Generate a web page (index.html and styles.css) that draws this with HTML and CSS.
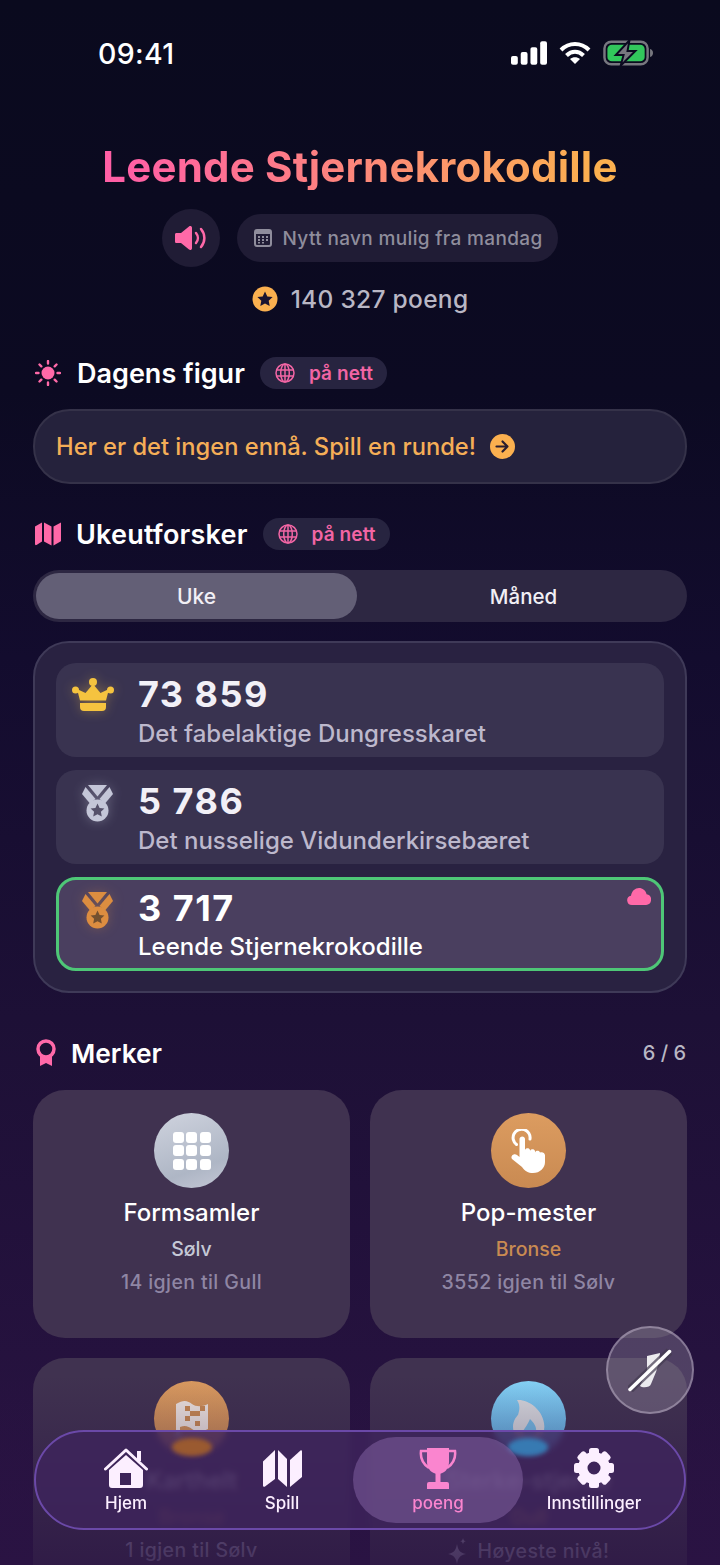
FILE: index.html
```html
<!DOCTYPE html>
<html>
<head>
  <title>Poeng</title>
  <link rel="stylesheet" href="styles.css">
</head>
<body>
<div class="screen">

  <!-- Status bar -->
  <div class="status">
    <span class="time">09:41</span>
    <div class="status-icons">
      <svg width="36" height="24" viewBox="0 0 37 24" fill="#fff">
        <rect x="0" y="15" width="7" height="9" rx="2"/>
        <rect x="10" y="11" width="7" height="13" rx="2"/>
        <rect x="20" y="6" width="7" height="18" rx="2"/>
        <rect x="30" y="0" width="7" height="24" rx="2"/>
      </svg>
      <svg width="32" height="24" viewBox="0 0 32 24" fill="none" stroke="#fff" stroke-width="4">
        <path d="M2 9C10 1 22 1 30 9"/>
        <path d="M7.5 14.5C12.5 9.5 19.500 9.500 24.500 14.500"/>
        <path d="M16 23l-5-5c3-2.500 7-2.500 10 0z" fill="#fff" stroke="none"/>
      </svg>
      <svg width="50" height="26" viewBox="0 0 51 26">
        <rect x="1.500" y="1.500" width="44" height="23" rx="7" fill="none" stroke="#77777f" stroke-width="2.500"/>
        <rect x="4.500" y="4.500" width="38" height="17" rx="4.500" fill="#32c75c"/>
        <path d="M48 9c2 .5 3 2 3 4s-1 3.500-3 4z" fill="#77777f"/>
        <path d="M27 0L13 15h8l-3 11 15-15h-8z" fill="#77777f" stroke="#0b0a20" stroke-width="2"/>
      </svg>
    </div>
  </div>

  <main class="content">
    <!-- Profile -->
    <h1 class="player-name">Leende Stjernekrokodille</h1>
    <div class="name-row">
      <button class="sound-btn">
        <svg width="34" height="26" viewBox="0 0 34 26" fill="none">
          <path d="M1 9.500c0-1 .7-1.500 1.500-1.500H7L15 1.500c1.200-1 3-.3 3 1.300v20.400c0 1.600-1.800 2.300-3 1.300L7 18H2.500C1.700 18 1 17.500 1 16.500z" fill="#ff69a8"/>
          <path d="M22 8c2.500 3 2.500 7 0 10M27 4c4.500 5.500 4.500 12.500 0 18" stroke="#ff69a8" stroke-width="2.500" stroke-linecap="round"/>
        </svg>
      </button>
      <div class="name-pill">
        <svg width="18" height="18" viewBox="0 0 18 18" fill="#8f8d9c">
          <path d="M3 0h12a3 3 0 0 1 3 3v12a3 3 0 0 1-3 3H3a3 3 0 0 1-3-3V3a3 3 0 0 1 3-3zM2 5v10a1 1 0 0 0 1 1h12a1 1 0 0 0 1-1V5z" fill-rule="evenodd"/>
          <rect x="4" y="7" width="2" height="2"/><rect x="8" y="7" width="2" height="2"/><rect x="12" y="7" width="2" height="2"/>
          <rect x="4" y="10" width="2" height="2"/><rect x="8" y="10" width="2" height="2"/><rect x="12" y="10" width="2" height="2"/>
          <rect x="4" y="13" width="2" height="1.500"/><rect x="8" y="13" width="2" height="1.500"/>
        </svg>
        <span>Nytt navn mulig fra mandag</span>
      </div>
    </div>
    <div class="points">
      <svg width="26" height="26" viewBox="0 0 26 26">
        <circle cx="13" cy="13" r="12.500" fill="#fbb04f"/>
        <path d="M13 5.500l2.300 4.900 5.300.7-3.900 3.700 1 5.300-4.700-2.600-4.700 2.600 1-5.300-3.900-3.700 5.300-.7z" fill="#1a1330"/>
      </svg>
      <span>140 327 poeng</span>
    </div>

    <!-- Dagens figur -->
    <div class="section-head head-daily">
      <svg class="head-icon" width="26" height="26" viewBox="0 0 26 26" fill="#ff69a8">
        <circle cx="13" cy="13" r="6.500"/>
        <g stroke="#ff69a8" stroke-width="2.400" stroke-linecap="round">
          <path d="M13 1v2.500M13 22.500V25M1 13h2.500M22.500 13H25M4.500 4.500l1.800 1.800M19.700 19.700l1.800 1.800M4.500 21.500l1.800-1.800M19.700 6.300l1.800-1.800"/>
        </g>
      </svg>
      <h2>Dagens figur</h2>
      <span class="online-pill">
        <svg class="globe" width="20" height="20" viewBox="0 0 20 20" fill="none" stroke="#f265a4" stroke-width="1.500">
          <circle cx="10" cy="10" r="9"/><ellipse cx="10" cy="10" rx="4.300" ry="9"/>
          <path d="M10 1v18M1.500 7h17M1.500 13h17"/>
        </svg>
        på nett
      </span>
    </div>
    <div class="daily-banner">
      <span>Her er det ingen ennå. Spill en runde!</span>
      <svg width="25" height="25" viewBox="0 0 25 25" fill="none">
        <circle cx="12.500" cy="12.500" r="12.500" fill="#fbb04f"/>
        <path d="M6.500 12.500h11M12.500 7.500l5 5-5 5" stroke="#2a1d2f" stroke-width="2.200" stroke-linecap="round" stroke-linejoin="round"/>
      </svg>
    </div>

    <!-- Ukeutforsker -->
    <div class="section-head head-weekly">
      <svg class="head-icon map-icon" width="26" height="24" viewBox="0 0 26 24" fill="#ff69a8">
        <path d="M0 4.500L7 0.500v19L1.500 23C.7 23.400 0 23 0 22z"/>
        <path d="M9 0.500l7.500 4v19L9 19.500z"/>
        <path d="M18.500 4.500L26 0.500V18.500a1 1 0 0 1-.5 1l-7 4z"/>
      </svg>
      <h2>Ukeutforsker</h2>
      <span class="online-pill">
        <svg class="globe" width="20" height="20" viewBox="0 0 20 20" fill="none" stroke="#f265a4" stroke-width="1.500">
          <circle cx="10" cy="10" r="9"/><ellipse cx="10" cy="10" rx="4.300" ry="9"/>
          <path d="M10 1v18M1.500 7h17M1.500 13h17"/>
        </svg>
        på nett
      </span>
    </div>
    <div class="segment">
      <div class="segment-item active">Uke</div>
      <div class="segment-item">Måned</div>
    </div>

    <div class="board">
      <div class="board-row">
        <div class="rank">
          <svg class="crown" width="42" height="34" viewBox="0 0 42 34" fill="#f5c33f">
            <circle cx="21" cy="4" r="4"/><circle cx="3.500" cy="12" r="3.500"/><circle cx="38.500" cy="12" r="3.500"/>
            <path d="M21 6l7.500 9L37 11l-3 11.500H8L5 11l8.500 4z"/>
            <path d="M8 25h26v4a4 4 0 0 1-4 4H12a4 4 0 0 1-4-4z"/>
          </svg>
        </div>
        <div class="row-text">
          <div class="score">73 859</div>
          <div class="row-name">Det fabelaktige Dungresskaret</div>
        </div>
      </div>
      <div class="board-row">
        <div class="rank">
          <svg class="medal silver" width="31" height="37" viewBox="0 0 31 37">
            <path class="ribbon" d="M6 0h19l-9.500 11.500z"/>
            <path class="ribbon" d="M3.500 2l10 12-5.500 4.500L0 9z"/>
            <path class="ribbon" d="M27.500 2l-10 12 5.500 4.500L31 9z"/>
            <circle class="disc" cx="15.500" cy="25.500" r="11"/>
            <path class="star" d="M15.500 18.500l2.100 4.400 4.800.6-3.500 3.300.9 4.800-4.300-2.400-4.300 2.400.9-4.800-3.500-3.300 4.800-.6z"/>
          </svg>
        </div>
        <div class="row-text">
          <div class="score">5 786</div>
          <div class="row-name">Det nusselige Vidunderkirsebæret</div>
        </div>
      </div>
      <div class="board-row mine">
        <div class="rank">
          <svg class="medal bronze" width="31" height="37" viewBox="0 0 31 37">
            <path class="ribbon" d="M6 0h19l-9.500 11.500z"/>
            <path class="ribbon" d="M3.500 2l10 12-5.500 4.500L0 9z"/>
            <path class="ribbon" d="M27.500 2l-10 12 5.500 4.500L31 9z"/>
            <circle class="disc" cx="15.500" cy="25.500" r="11"/>
            <path class="star" d="M15.500 18.500l2.100 4.400 4.800.6-3.500 3.300.9 4.800-4.300-2.400-4.300 2.400.9-4.800-3.500-3.300 4.800-.6z"/>
          </svg>
        </div>
        <div class="row-text">
          <div class="score">3 717</div>
          <div class="row-name">Leende Stjernekrokodille</div>
        </div>
        <svg class="cloud" width="24" height="17" viewBox="0 0 25 18" fill="#ff69a8">
          <path d="M5 18a5 5 0 0 1-1-9.900C5 3 8.500 0 12.500 0c3.800 0 7 2.500 8 6.500A5.800 5.800 0 0 1 20 18z"/>
        </svg>
      </div>
    </div>

    <!-- Merker -->
    <div class="section-head head-badges">
      <svg class="head-icon" width="22" height="28" viewBox="0 0 22 28" fill="none">
        <path d="M5 17v10l6-3 6 3V17z" fill="#ff69a8"/>
        <circle cx="11" cy="10" r="8" stroke="#ff69a8" stroke-width="3.500" fill="#1d1033"/>
      </svg>
      <h2>Merker</h2>
      <span class="badge-count">6 / 6</span>
    </div>
    <div class="badges">
      <div class="badge">
        <div class="badge-icon icon-silver">
          <div class="dots">
            <i></i><i></i><i></i><i></i><i></i><i></i><i></i><i></i><i></i>
          </div>
        </div>
        <div class="badge-name">Formsamler</div>
        <div class="badge-tier tier-silver">Sølv</div>
        <div class="badge-next">14 igjen til Gull</div>
      </div>
      <div class="badge">
        <div class="badge-icon icon-bronze">
          <svg width="38" height="44" viewBox="0 0 38 44" fill="#fff">
            <path d="M6.500 15.500A8.500 8.500 0 1 1 20 10" fill="none" stroke="#fff" stroke-width="3" stroke-linecap="round"/>
            <path d="M9.500 10c0-3.500 5.500-3.500 5.500 0v11c.5-2.500 4.500-2.500 5 0v1c.5-2.500 4.500-2.500 5 0v1.500c.5-2.500 4.500-2.500 5 0 3-1 5 1 5 3V33c0 6-5 11-12 11-5 0-8-2-11-6L2 30c-2-3 2-6 5-4l2.500 2z"/>
          </svg>
        </div>
        <div class="badge-name">Pop-mester</div>
        <div class="badge-tier tier-bronze">Bronse</div>
        <div class="badge-next">3552 igjen til Sølv</div>
      </div>
      <div class="badge">
        <div class="badge-icon icon-bronze">
          <svg width="32" height="40" viewBox="0 0 32 40">
            <path d="M0 5c8-5 12-3 16 0s10 3 16 0v25c-6 3-12 3-16 0s-8-5-16 0z" fill="#efe6e0"/>
            <g fill="#c98a52">
              <rect x="9" y="7" width="5" height="5"/><rect x="19" y="12" width="5" height="5"/>
              <rect x="14" y="12" width="5" height="5"/><rect x="9" y="17" width="5" height="5"/>
              <rect x="24" y="7" width="5" height="5"/><rect x="19" y="22" width="5" height="5"/>
            </g>
            <rect x="0" y="5" width="4" height="35" rx="2" fill="#efe6e0"/>
          </svg>
        </div>
        <div class="badge-name">Karthelt</div>
        <div class="badge-tier tier-bronze">Bronse</div>
        <div class="badge-next">1 igjen til Sølv</div>
      </div>
      <div class="badge">
        <div class="badge-icon icon-blue">
          <svg width="34" height="44" viewBox="0 0 34 44">
            <path d="M5 3C16 2 30 12 32 26c2 10-4 18-15 18C7 44 1 38 1 30c0-6 3-10 5-12C8 12 8 8 5 3z" fill="#d8dade"/>
            <path d="M18 22c4 4 7 8 6 13-1 4-4 6-7 6-4 0-7-3-6-7 2-3 5-7 7-12z" fill="#74bde6"/>
          </svg>
        </div>
        <div class="badge-name">Sterke-stjerne</div>
        <div class="badge-tier tier-gold">Gull</div>
        <div class="badge-next">
          <svg width="20" height="26" viewBox="0 0 20 26" fill="#8f86a4">
            <path d="M9 6c1 6 3 9 9 10-6 1-8 4-9 10-1-6-3-9-9-10 6-1 8-4 9-10zM15 0c.3 2 1 3 3 3.300-2 .3-2.700 1.300-3 3.200-.3-1.900-1-2.900-3-3.200 2-.3 2.700-1.300 3-3.300z"/>
          </svg>
          Høyeste nivå!
        </div>
      </div>
    </div>
  </main>

  <div class="bottom-fade"></div>

  <!-- Floating mute button -->
  <button class="fab">
    <svg width="44" height="44" viewBox="0 0 44 44" fill="none">
      <path d="M19 8l13-3-1 9-3 10-5 12c-1 4-9 4-11 2l7-16z" fill="#ecebef"/>
      <path d="M41.500 3.500L2 41.500" stroke="#433a50" stroke-opacity="0.7" stroke-width="8"/>
      <path d="M41.500 3.500L2 41.500" stroke="#fff" stroke-width="3.500" stroke-linecap="round"/>
    </svg>
  </button>

  <!-- Bottom navigation -->
  <nav class="tabbar">
    <span class="refract refract-left"></span>
    <span class="refract refract-right"></span>
    <a class="tab">
      <span class="tab-icon">
        <svg width="44" height="40" viewBox="0 0 44 40" fill="#fcefff">
          <path d="M1.500 21L22 2l20.500 19" fill="none" stroke="#fcefff" stroke-width="3" stroke-linecap="round" stroke-linejoin="round"/>
          <rect x="33" y="3" width="4" height="10"/>
          <path fill-rule="evenodd" d="M5 22L22 7l17 15v15a3 3 0 0 1-3 3H8a3 3 0 0 1-3-3zM16 25v12h11V25z"/>
        </svg>
      </span>
      <span class="tab-label">Hjem</span>
    </a>
    <a class="tab">
      <span class="tab-icon">
        <svg width="39" height="37" viewBox="0 0 39 37" fill="#fcefff">
          <path d="M0 11.500L12 0v29L2 36.500c-1 .6-2 .2-2-1z"/>
          <path d="M15 0l9 9v28l-9-8z"/>
          <path d="M27 10L37.500.5c.7-.6 1.500-.2 1.500.7V27L27 37z"/>
        </svg>
      </span>
      <span class="tab-label">Spill</span>
    </a>
    <a class="tab active">
      <span class="tab-icon">
        <svg width="38" height="41" viewBox="0 0 38 41" fill="#fa85cf">
          <path d="M8 0h22v14c0 7-5 12-11 12S8 21 8 14z"/>
          <path d="M8 3H2c-1 8 2 13 8 17M30 3h6c1 8-2 13-8 17" fill="none" stroke="#fa85cf" stroke-width="2.500"/>
          <rect x="16.500" y="25" width="5" height="9"/>
          <path d="M10 34h18a2 2 0 0 1 2 2v5H8v-5a2 2 0 0 1 2-2z"/>
        </svg>
      </span>
      <span class="tab-label">poeng</span>
    </a>
    <a class="tab">
      <span class="tab-icon">
        <svg width="40" height="40" viewBox="-20 -20 40 40" fill="#fcefff">
          <circle r="11.250" fill="none" stroke="#fcefff" stroke-width="9.500"/>
          <rect x="-5" y="-20" width="10" height="8" rx="2.500"/>
          <rect x="-5" y="-20" width="10" height="8" rx="2.500" transform="rotate(45)"/>
          <rect x="-5" y="-20" width="10" height="8" rx="2.500" transform="rotate(90)"/>
          <rect x="-5" y="-20" width="10" height="8" rx="2.500" transform="rotate(135)"/>
          <rect x="-5" y="-20" width="10" height="8" rx="2.500" transform="rotate(180)"/>
          <rect x="-5" y="-20" width="10" height="8" rx="2.500" transform="rotate(225)"/>
          <rect x="-5" y="-20" width="10" height="8" rx="2.500" transform="rotate(270)"/>
          <rect x="-5" y="-20" width="10" height="8" rx="2.500" transform="rotate(315)"/>
        </svg>
      </span>
      <span class="tab-label">Innstillinger</span>
    </a>
  </nav>

</div>
</body>
</html>
```

FILE: styles.css
```css
* {
  box-sizing: border-box;
}
html, body {
  margin: 0;
  padding: 0;
  background: #0b0a20;
}
.screen {
  position: relative;
  width: 720px;
  height: 1565px;
  overflow: hidden;
  font-family: Inter, "Noto Sans", sans-serif;
  color: #fff;
  background: linear-gradient(180deg, #0a0a1e 0%, #0c0a22 25%, #130c2e 42%, #1d1036 65%, #2a1343 100%);
}
svg {
  display: block;
  flex: none;
}

/* Status bar */
.status {
  display: flex;
  justify-content: space-between;
  align-items: center;
  height: 34px;
  margin-top: 36px;
  padding: 0 67px 0 98px;
}
.time {
  font-size: 28.5px;
  font-weight: 500;
  letter-spacing: 0.3px;
}
.status-icons {
  display: flex;
  align-items: center;
  gap: 12px;
}

.content {
  padding: 0 33px;
}

/* Profile */
.player-name {
  margin: 74px 0 0;
  font-size: 42px;
  line-height: 46px;
  font-weight: 700;
  letter-spacing: 0.2px;
  text-align: center;
  white-space: nowrap;
  background: linear-gradient(90deg, #ff5fa5 14%, #fbb04f 86%);
  background-clip: text;
  -webkit-background-clip: text;
  color: transparent;
}
.name-row {
  display: flex;
  justify-content: center;
  align-items: center;
  gap: 17px;
  margin-top: 19px;
}
.sound-btn {
  display: flex;
  align-items: center;
  justify-content: center;
  width: 58px;
  height: 58px;
  padding: 0;
  border: none;
  border-radius: 50%;
  background: #201c35;
}
.name-pill {
  display: flex;
  align-items: center;
  gap: 10px;
  height: 48px;
  padding: 0 15px 0 17px;
  border-radius: 24px;
  background: #201c35;
  color: #8f8d9c;
  font-size: 19px;
  font-weight: 500;
  letter-spacing: 0.35px;
}
.points {
  display: flex;
  justify-content: center;
  align-items: center;
  gap: 13px;
  margin-top: 17px;
  color: #b9b7c4;
  font-size: 24.5px;
  font-weight: 500;
  letter-spacing: 0.3px;
}

/* Section headings */
.section-head {
  display: flex;
  align-items: center;
  height: 36px;
}
.section-head h2 {
  margin: 0;
  font-size: 27px;
  font-weight: 600;
}
.head-daily {
  margin-top: 41px;
  padding-left: 2px;
}
.head-daily h2 {
  margin: 0 15px 0 16px;
}
.head-weekly {
  margin-top: 32px;
  padding-left: 2px;
}
.head-weekly h2 {
  margin: 0 15px 0 15px;
  letter-spacing: 0.2px;
}
.head-badges {
  justify-content: flex-start;
  margin-top: 42px;
  padding-left: 2px;
}
.head-badges h2 {
  margin-left: 14px;
  font-size: 26.3px;
}
.badge-count {
  margin-left: auto;
  padding-right: 1px;
  color: #b9b7c4;
  font-size: 20px;
  font-weight: 500;
}
.online-pill {
  display: flex;
  align-items: center;
  gap: 14px;
  height: 32px;
  padding: 0 14px 0 15px;
  border-radius: 16px;
  background: #272440;
  color: #f265a4;
  font-size: 19px;
  font-weight: 600;
  letter-spacing: 0.1px;
}

/* Daily banner */
.daily-banner {
  display: flex;
  align-items: center;
  gap: 14px;
  height: 75px;
  margin-top: 18px;
  padding: 0 21px;
  border: 2px solid #353249;
  border-radius: 37px;
  background: #25223c;
  color: #f5ae57;
  font-size: 23.7px;
  font-weight: 500;
}

/* Week / month toggle */
.segment {
  display: flex;
  height: 52px;
  margin-top: 18px;
  padding: 3px;
  border-radius: 26px;
  background: #2d2742;
}
.segment-item {
  flex: 1;
  display: flex;
  align-items: center;
  justify-content: center;
  padding-left: 6px;
  border-radius: 23px;
  font-size: 20.5px;
  font-weight: 500;
  color: #f1eff5;
}
.segment-item.active {
  flex: 0 0 321px;
  padding-left: 0;
  font-size: 21px;
  background: #635f76;
}

/* Leaderboard */
.board {
  display: flex;
  flex-direction: column;
  gap: 13px;
  height: 352px;
  margin-top: 19px;
  padding: 20px 21px;
  border: 2px solid #3f3a58;
  border-radius: 36px;
  background: #292241;
}
.board-row {
  position: relative;
  display: flex;
  height: 94px;
  border-radius: 20px;
  background: #393350;
}
.rank {
  display: flex;
  justify-content: center;
  width: 82px;
  padding-top: 15px;
}
.crown {
  margin-left: -8px;
  filter: drop-shadow(0 0 6px rgba(245, 195, 63, 0.35));
}
.row-text {
  padding-top: 9px;
}
.score {
  font-size: 36px;
  line-height: 44px;
  font-weight: 700;
  letter-spacing: 1.5px;
  color: #f2f0f7;
}
.row-name {
  margin-top: 3px;
  font-size: 24px;
  line-height: 30px;
  font-weight: 500;
  color: #bdb8cc;
}
.board-row.mine {
  border: 3px solid #4ec777;
  background: #4a3f5f;
}
.mine .rank {
  margin-left: -3px;
  padding-top: 12px;
}
.mine .row-text {
  padding-top: 6px;
}
.mine .score {
  color: #fff;
}
.mine .row-name {
  margin-top: 2px;
  color: #fff;
}
.cloud {
  position: absolute;
  top: 8px;
  right: 10px;
}
.medal .ribbon,
.medal .disc {
  fill: #c4c6d8;
}
.medal .star {
  fill: #55506a;
}
.medal.silver {
  filter: drop-shadow(0 0 6px rgba(196, 198, 216, 0.35));
}
.medal.bronze {
  filter: drop-shadow(0 0 6px rgba(220, 141, 64, 0.3));
}
.medal.bronze .ribbon,
.medal.bronze .disc {
  fill: #dc8d40;
}
.medal.bronze .star {
  fill: #73502f;
}

/* Badges */
.badges {
  display: grid;
  grid-template-columns: 317px 317px;
  gap: 20px;
  margin-top: 19px;
}
.badge {
  display: flex;
  flex-direction: column;
  align-items: center;
  height: 248px;
  padding-top: 23px;
  border-radius: 32px;
  background: #403250;
}
.badge-icon {
  display: flex;
  align-items: center;
  justify-content: center;
  width: 75px;
  height: 75px;
  border-radius: 50%;
}
.icon-silver {
  background: linear-gradient(160deg, #cfd3de, #aeb6c5 70%, #c5c8d6);
}
.icon-bronze {
  background: linear-gradient(180deg, #dc9c60, #c98a52);
}
.icon-blue {
  background: linear-gradient(180deg, #86d4f8, #5ea9dc);
}
.dots {
  display: grid;
  grid-template-columns: repeat(3, 11px);
  gap: 2.5px;
}
.dots i {
  height: 11px;
  border-radius: 3px;
  background: #fff;
}
.badge-name {
  margin-top: 14px;
  font-size: 24px;
  line-height: 22px;
  font-weight: 500;
}
.badge-tier {
  margin-top: 13px;
  font-size: 19.5px;
  line-height: 24px;
  font-weight: 500;
}
.tier-silver {
  color: #c5c8d6;
}
.tier-bronze {
  color: #c98a52;
}
.tier-gold {
  color: #f5c33f;
}
.badge-next {
  display: flex;
  align-items: center;
  gap: 10px;
  margin-top: 9px;
  font-size: 19.5px;
  line-height: 24px;
  font-weight: 500;
  letter-spacing: 0.4px;
  color: #8f86a4;
}

/* Dim the cards that run off the bottom */
.bottom-fade {
  position: absolute;
  left: 0;
  right: 0;
  bottom: 0;
  height: 190px;
  background: linear-gradient(180deg, rgba(42, 19, 67, 0) 0%, rgba(42, 19, 67, 0.72) 100%);
}

/* Floating button */
.fab {
  position: absolute;
  top: 1326px;
  left: 606px;
  display: flex;
  align-items: center;
  justify-content: center;
  width: 88px;
  height: 88px;
  padding: 0;
  border: 2px solid rgba(215, 205, 225, 0.4);
  border-radius: 50%;
  background: rgba(150, 140, 160, 0.38);
}

/* Tab bar */
.tabbar {
  position: absolute;
  top: 1430px;
  left: 34px;
  display: grid;
  grid-template-columns: repeat(4, 156px);
  width: 652px;
  height: 100px;
  padding-left: 12px;
  border: 2px solid #6b49a8;
  border-radius: 50px;
  background: rgba(62, 36, 92, 0.8);
  backdrop-filter: blur(3px);
}
.refract {
  position: absolute;
  top: 6px;
  width: 40px;
  height: 18px;
  border-radius: 50%;
  filter: blur(2px);
}
.refract-left {
  left: 136px;
  background: #9a5a30;
}
.refract-right {
  left: 472px;
  background: #377ab2;
}
.tab {
  position: relative;
  display: flex;
  flex-direction: column;
  align-items: center;
  padding-top: 15px;
  color: #fcefff;
}
.tab-icon {
  display: flex;
  align-items: center;
  justify-content: center;
  height: 42px;
}
.tab-label {
  margin-top: 4px;
  font-size: 17px;
  line-height: 20px;
  font-weight: 500;
  white-space: nowrap;
}
.tab.active {
  justify-self: center;
  width: 170px;
  height: 86px;
  margin-top: 5px;
  padding-top: 10px;
  border-radius: 43px;
  background: rgba(130, 96, 160, 0.55);
  color: #fa85cf;
}
```
